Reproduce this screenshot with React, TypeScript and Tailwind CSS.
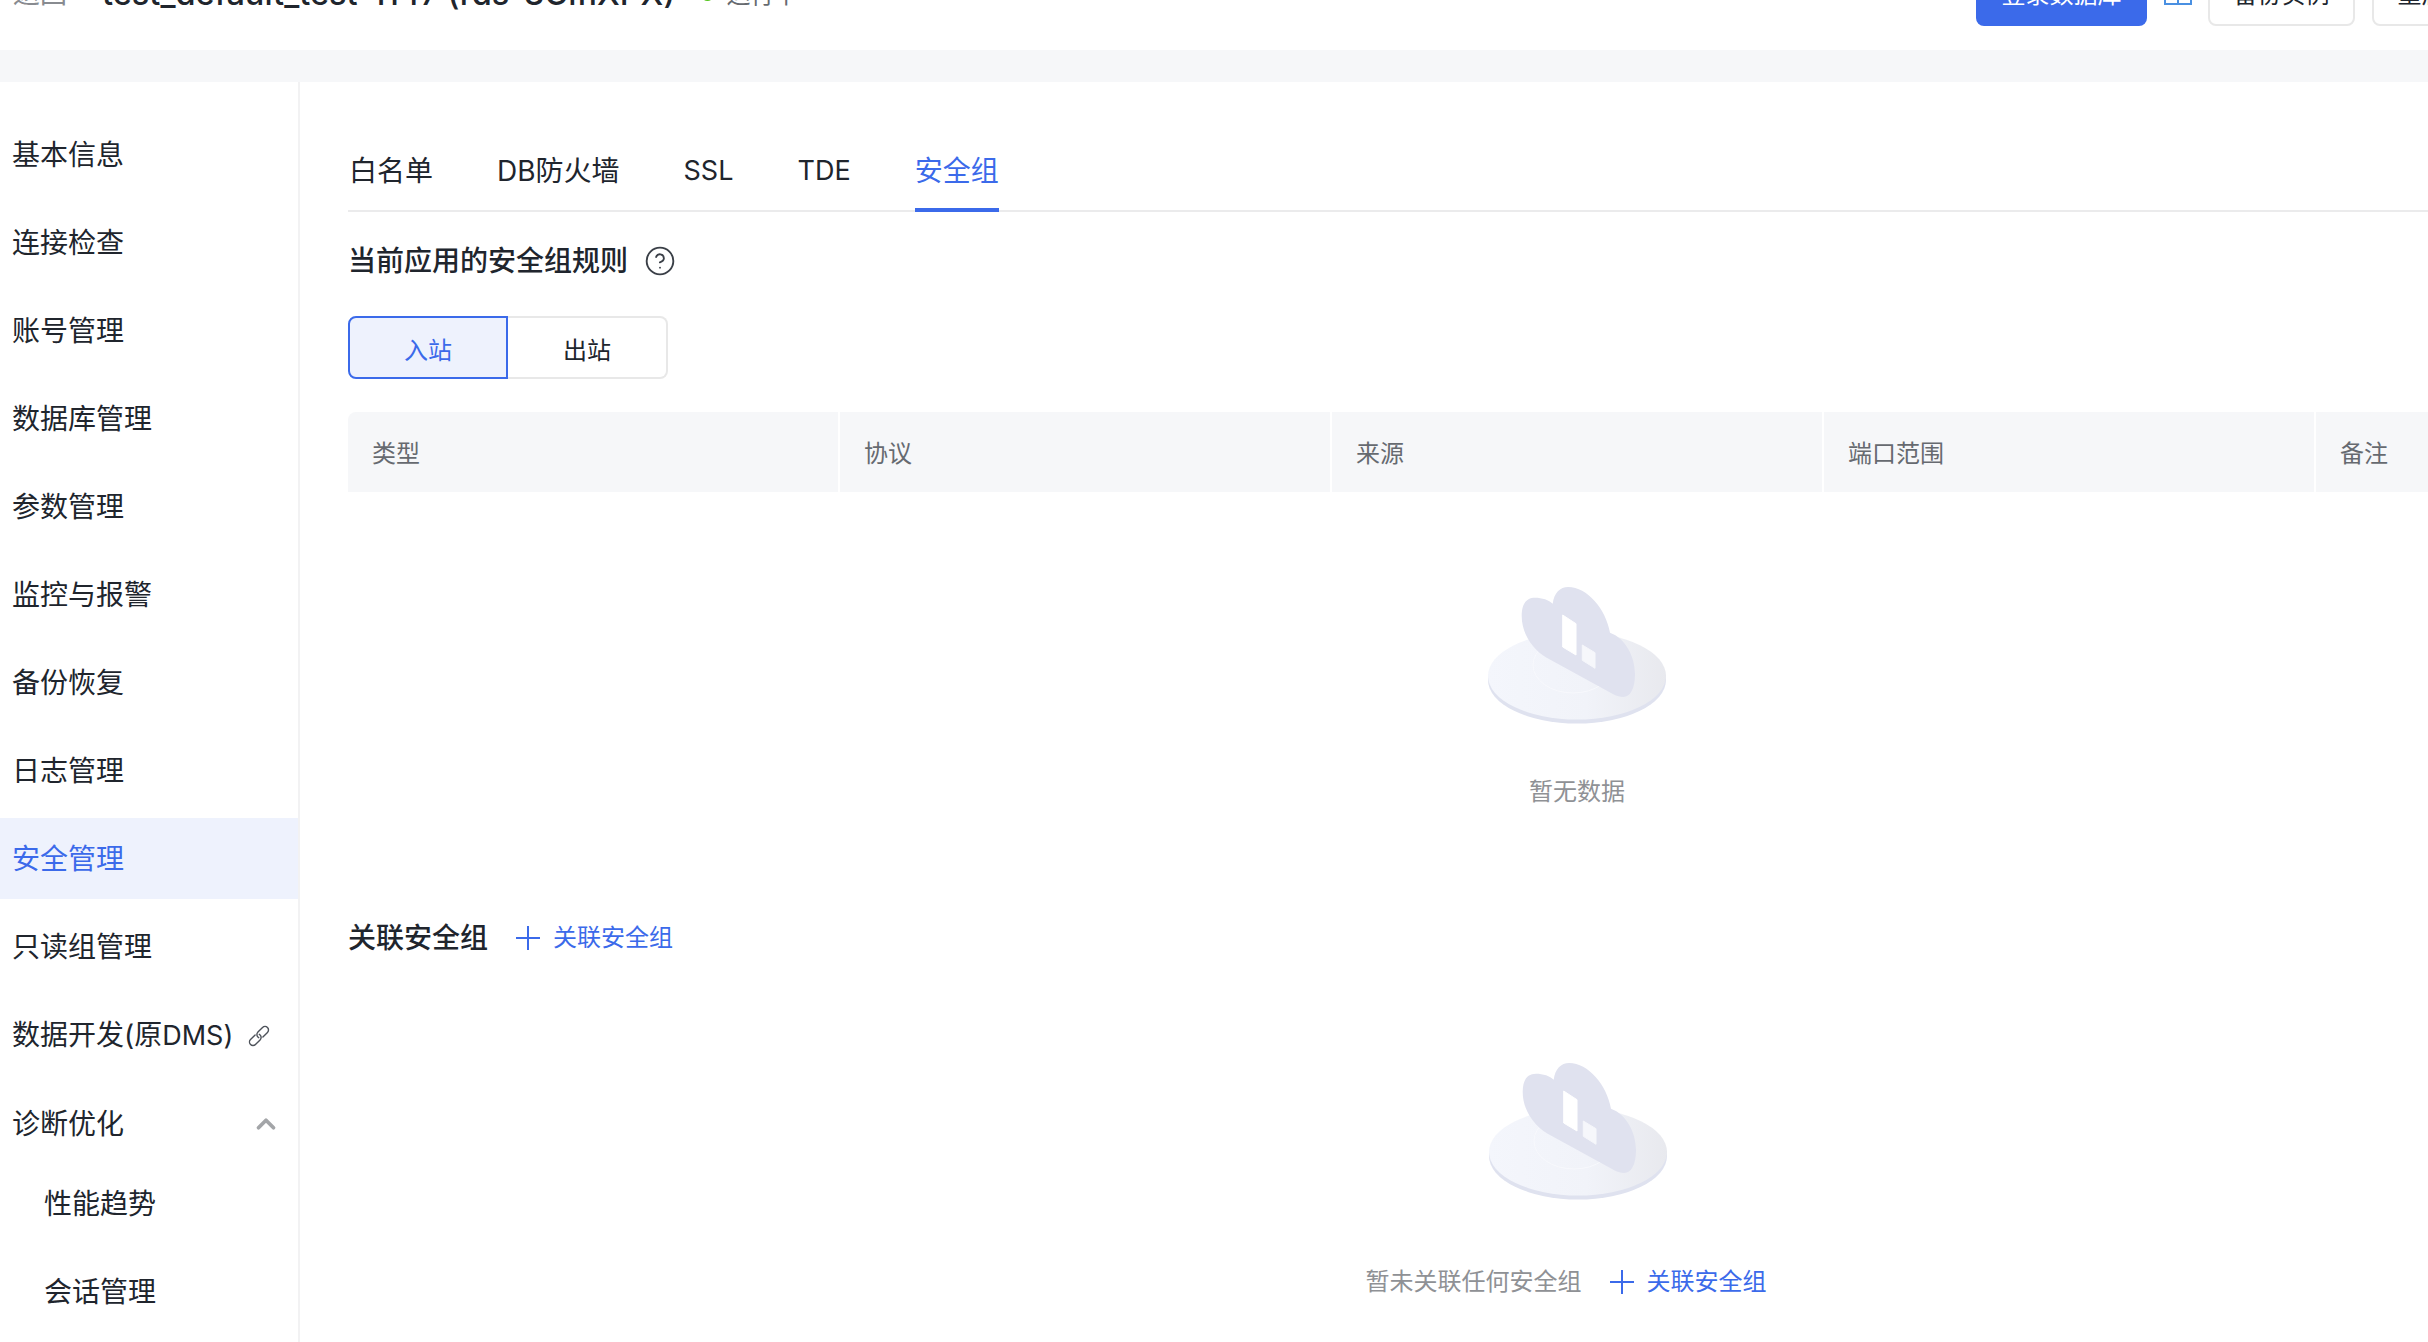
import React from "react";
import { ChevronUp, CircleHelp } from "lucide-react";

const menu = ["基本信息", "连接检查", "账号管理", "数据库管理", "参数管理", "监控与报警", "备份恢复", "日志管理", "安全管理", "只读组管理"];
const tabs = ["白名单", "DB防火墙", "SSL", "TDE", "安全组"];
const cols = ["类型", "协议", "来源", "端口范围", "备注"];

function EmptyArt({ className }: { className?: string }) {
  return (
    <svg width="200" height="150" viewBox="0 0 200 150" className={className}>
      <defs>
        <linearGradient id="disc" x1="0" y1="0" x2="1" y2="0">
          <stop offset="0" stopColor="#f4f6fc" />
          <stop offset="0.55" stopColor="#f1f3f9" />
          <stop offset="1" stopColor="#e8e9ee" />
        </linearGradient>
      </defs>
      <ellipse cx="100" cy="99" rx="89" ry="43.5" fill="#dfe2ef" />
      <ellipse cx="100" cy="95" rx="89" ry="43.5" fill="url(#disc)" />
      <ellipse cx="96" cy="84" rx="40" ry="28" fill="none" stroke="#f8f9fd" strokeWidth="1" />
      <path
        d="M69.7 76.7C55 68 44.7 52 44.7 35C44.7 22 50 16.7 58 16.7C65 16.7 72 19 75.7 22.7C77 12 83 6 91.3 6C110 6 129 28 133 51.7C148 57 158 75 158 93.3C158 108 153 116 146.3 116C143 116 140 115 136.3 113.3Z"
        fill="#e0e2ef"
      />
      <path d="M85.7 34L99 42.7V74L85.7 66Z" fill="#ffffff" stroke="#ffffff" strokeWidth="1" strokeLinejoin="round" />
      <path d="M105.3 64L118 71.7V87.3L105.3 79.3Z" fill="#f6f7fb" stroke="#f6f7fb" strokeWidth="1" strokeLinejoin="round" />
    </svg>
  );
}

function AddLink() {
  return (
    <span className="flex items-center gap-[13px] text-[24px] font-normal leading-[32px] text-[#3b6aea]">
      <svg width="24" height="24" viewBox="0 0 24 24" className="shrink-0">
        <path d="M0 12H24M12 0V24" stroke="#3b6aea" strokeWidth="2" fill="none" />
      </svg>
      <span>关联安全组</span>
    </span>
  );
}

function ChainIcon() {
  return (
    <svg width="24" height="24" viewBox="0 0 24 24" className="ml-[14px] shrink-0" fill="none" stroke="#4d525a" strokeWidth="1.4" strokeLinecap="round">
      <g transform="rotate(-45 12 12)">
        <path d="M10 8.5H3.5a3.5 3.5 0 0 0 0 7H10a3.5 3.5 0 0 0 3.4-4.5" />
        <path d="M14 15.5H20.5a3.5 3.5 0 0 0 0-7H14a3.5 3.5 0 0 0-3.4 4.5" />
      </g>
    </svg>
  );
}

export default function App() {
  return (
    <div className="h-[1342px] w-[2428px] overflow-hidden bg-white font-['Inter','Noto_Sans_CJK_SC',sans-serif] text-[#20252d]">
      <header className="h-[50px] overflow-hidden">
        <div className="-mt-[37px] flex h-[63px] items-center whitespace-nowrap pl-[13px] pr-0">
          <span className="text-[27px] text-[#888b90]">返回</span>
          <span className="ml-[35px] text-[32.5px] font-medium">test_default_test-1147 (rds-3ClfiXPX)</span>
          <span className="ml-[26px] h-[13px] w-[13px] rounded-full bg-[#52c41a]" />
          <span className="ml-[12px] text-[24px] text-[#666a70]">运行中</span>
          <div className="-mr-[91px] ml-auto flex shrink-0 items-center">
            <button className="flex h-[63px] w-[171px] items-center justify-center rounded-[8px] bg-[#3b6aea] text-[24px] text-white">登录数据库</button>
            <svg width="28" height="28" viewBox="0 0 28 28" className="mb-[7px] ml-[17px]">
              <path d="M1 1H27V27H1ZM14 1V27" fill="none" stroke="#4a90e2" strokeWidth="2" />
            </svg>
            <button className="ml-[16px] flex h-[63px] w-[147px] items-center justify-center rounded-[8px] border-2 border-[#e8e8e8] text-[24px]">备份实例</button>
            <button className="ml-[17px] flex h-[63px] w-[147px] items-center justify-center rounded-[8px] border-2 border-[#e8e8e8] text-[24px]">重启实例</button>
          </div>
        </div>
      </header>
      <div className="h-[32px] bg-[#f6f7f9]" />
      <div className="flex h-[1260px]">
        <aside className="w-[300px] shrink-0 border-r-2 border-[#f2f2f3] pt-[32px] text-[28px]">
          <nav className="flex flex-col gap-[7px]">
            {menu.map((m) => (
              <div
                key={m}
                className={
                  m === "安全管理"
                    ? "flex h-[81px] items-center bg-[#eef2fd] pl-[12px] pt-[1px] text-[#3b6aea]"
                    : "flex h-[81px] items-center pl-[12px] pt-[1px]"
                }
              >
                {m}
              </div>
            ))}
            <div className="flex h-[81px] items-center pl-[12px] pt-[2px]">
              <span>
                数据开发(原<span className="text-[27px]">DMS)</span>
              </span>
              <ChainIcon />
            </div>
            <div className="flex h-[81px] items-center pl-[12px] pr-[20px] pt-[3px]">
              <span>诊断优化</span>
              <ChevronUp size={30} strokeWidth={3} className="ml-auto -mr-[3px] text-[#a3a5a8]" />
            </div>
            <div className="-mt-[9px] flex h-[81px] items-center pl-[44px] pt-[5px]">性能趋势</div>
            <div className="flex h-[81px] items-center pl-[44px] pt-[5px]">会话管理</div>
          </nav>
        </aside>
        <main className="min-w-0 flex-1 overflow-hidden pl-[48px]">
          <div className="flex h-[130px] items-end gap-[64px] border-b-2 border-[#ebebec] pl-[1px]">
            {tabs.map((t) => (
              <div
                key={t}
                className={
                  t === "安全组"
                    ? "-mb-[2px] flex h-[82px] items-center border-b-4 border-[#3b6aea] pt-[4px] text-[28px] text-[#3b6aea]"
                    : t === "SSL" || t === "TDE"
                      ? "-mb-[2px] flex h-[82px] items-center border-b-4 border-transparent pt-[4px] text-[27px]"
                      : "-mb-[2px] flex h-[82px] items-center border-b-4 border-transparent pt-[4px] text-[28px]"
                }
              >
                {t}
              </div>
            ))}
          </div>
          <div className="w-[2458px]">
            <div className="mt-[28px] flex h-[40px] items-center gap-[16px] pt-[1px] text-[28px] font-medium">
              <span>当前应用的安全组规则</span>
              <CircleHelp size={32} strokeWidth={1.4} className="text-[#3a3f47]" />
            </div>
            <div className="mt-[36px] flex h-[63px] w-[320px] text-[24px]">
              <button className="h-full w-[160px] rounded-l-[8px] border-2 border-[#3b6aea] bg-[#eef2fd] pt-[7px] text-[#3b6aea]">入站</button>
              <button className="h-full w-[160px] rounded-r-[8px] border-2 border-l-0 border-[#e8e8e8] pt-[7px]">出站</button>
            </div>
            <div className="mt-[33px] grid h-[80px] grid-cols-5 gap-[2px] overflow-hidden rounded-t-[8px]">
              {cols.map((c) => (
                <div key={c} className="flex items-center bg-[#f6f7f9] pl-[24px] pt-[4px] text-[24px] text-[#666a70]">
                  {c}
                </div>
              ))}
            </div>
            <div className="flex flex-col items-center">
              <EmptyArt className="mt-[89px]" />
              <div className="mt-[45px] text-[24px] leading-[32px] text-[#8f9195]">暂无数据</div>
            </div>
            <div className="mt-[110px] flex h-[40px] items-center gap-[28px] text-[28px] font-medium">
              <span>关联安全组</span>
              <AddLink />
            </div>
            <div className="flex flex-col items-center">
              <EmptyArt className="mt-[99px] translate-x-[1px]" />
              <div className="mt-[59px] flex items-center gap-[28px] pr-[22px]">
                <span className="text-[24px] leading-[32px] text-[#8f9195]">暂未关联任何安全组</span>
                <AddLink />
              </div>
            </div>
          </div>
        </main>
      </div>
    </div>
  );
}
